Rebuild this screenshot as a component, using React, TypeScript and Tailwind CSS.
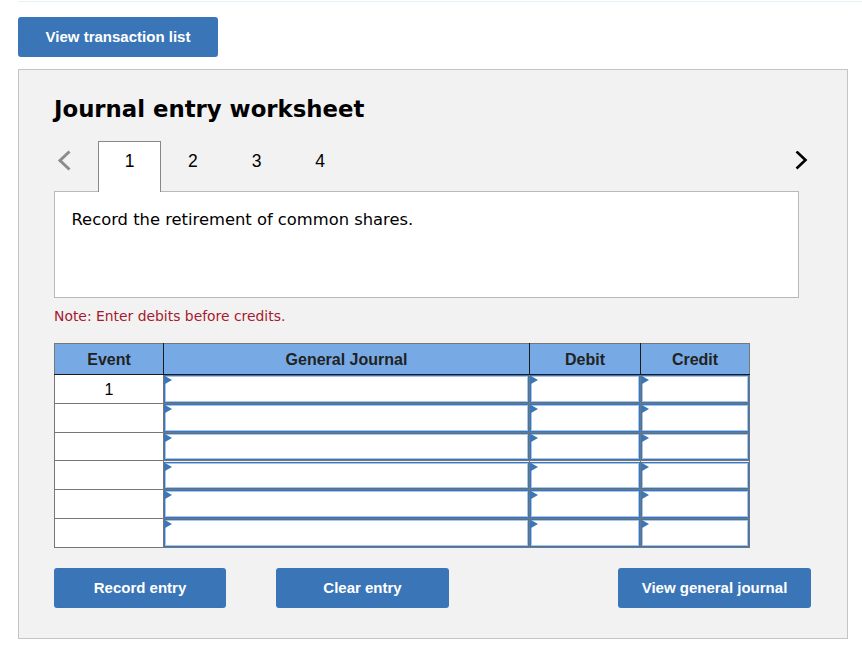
import * as React from "react";

const rows = ["1", "", "", "", "", ""];

function EntryCell() {
  return (
    <td className="h-[28.83px] border border-[#767676] p-0">
      <div className="relative h-[27.8px] border border-[#3b76b9] bg-white shadow-[inset_0_0_0_1px_#a9c6ea]">
        {/* corner marker */}
        <span className="absolute left-0 top-0 h-0 w-0 border-y-[4.5px] border-l-[7px] border-y-transparent border-l-[#3b76b9]" />
      </div>
    </td>
  );
}

function ActionButton({ label, className }: { label: string; className: string }) {
  return (
    <button
      type="button"
      className={`h-10 rounded-[3px] bg-[#3a75b8] pt-px text-[15px] font-bold text-white ${className}`}
    >
      {label}
    </button>
  );
}

export default function App() {
  return (
    <div className="h-[652px] w-[862px] overflow-hidden bg-white pl-[18px] font-['Liberation_Sans',Arial,sans-serif] text-black">
      <div className="mt-px h-px bg-[#e6f0f7]" />
      <ActionButton label="View transaction list" className="mt-[15px] block w-[200px]" />

      <div className="mt-3 h-[570px] w-[830px] border border-[#c4c4c4] bg-[#f2f2f2] pl-[35px] pt-[22px]">
        <h1 className="font-['DejaVu_Sans',Verdana,sans-serif] text-[22.8px] leading-[34px] font-bold">
          Journal entry worksheet
        </h1>

        <div className="mt-[15px] flex h-[51px] w-[745px] items-start">
          <svg width="44" height="38" viewBox="0 0 44 38" fill="none" className="shrink-0">
            <path d="M15.5 10.5 L6 19.5 L15.5 28.5" stroke="#8c8c8c" strokeWidth="3" />
          </svg>
          <div className="relative z-10 flex h-[51px] w-[63px] justify-center border border-b-0 border-[#888888] bg-white pt-[9px] text-[17.5px] leading-5">
            1
          </div>
          {["2", "3", "4"].map((tab) => (
            <div key={tab} className="flex h-[51px] w-[63.7px] justify-center pt-2.5 text-[17.5px] leading-5">
              {tab}
            </div>
          ))}
          <svg width="18" height="20" viewBox="0 0 18 20" fill="none" className="mt-2.5 ml-auto -mr-[13px] shrink-0">
            <path d="M2.5 0.5 L11.5 9 L2.5 17.5" stroke="#000000" strokeWidth="2.6" />
          </svg>
        </div>

        <div className="-mt-px h-[107px] w-[745px] border border-[#b9b9b9] bg-white pl-[16.5px] pr-[17px] pt-4 font-['DejaVu_Sans',Verdana,sans-serif] text-[16.35px] leading-[24px]">
          Record the retirement of common shares.
        </div>

        <p className="mt-[8px] font-['DejaVu_Sans',Verdana,sans-serif] text-[13.9px] leading-5 text-[#a6192e]">
          Note: Enter debits before credits.
        </p>

        <table className="mt-[17px] w-[695px] table-fixed border-collapse border border-[#767676] text-[16px]">
          <colgroup>
            <col className="w-[109px]" />
            <col className="w-[366px]" />
            <col className="w-[111px]" />
            <col className="w-[109px]" />
          </colgroup>
          <thead>
            <tr className="h-[31px] bg-[#77aae5] font-bold text-[#222222]">
              <th className="border border-[#767676] border-r-[#1a1a1a] border-b-[#1a1a1a] pt-0.5">Event</th>
              <th className="border border-[#767676] border-x-[#1a1a1a] border-b-[#1a1a1a] pt-0.5">General Journal</th>
              <th className="border border-[#767676] border-x-[#1a1a1a] border-b-[#1a1a1a] pt-0.5">Debit</th>
              <th className="border border-[#767676] border-l-[#1a1a1a] border-b-[#1a1a1a] pt-0.5">Credit</th>
            </tr>
          </thead>
          <tbody>
            {rows.map((event, i) => (
              <tr key={i}>
                <td className="h-[28.83px] border border-[#767676] bg-white p-0 pt-0.5 text-center leading-none">{event}</td>
                <EntryCell />
                <EntryCell />
                <EntryCell />
              </tr>
            ))}
          </tbody>
        </table>

        <div className="mt-5 flex w-[757px]">
          <ActionButton label="Record entry" className="w-[172px]" />
          <ActionButton label="Clear entry" className="ml-[50px] w-[173px]" />
          <ActionButton label="View general journal" className="ml-auto w-[193px]" />
        </div>
      </div>
    </div>
  );
}
